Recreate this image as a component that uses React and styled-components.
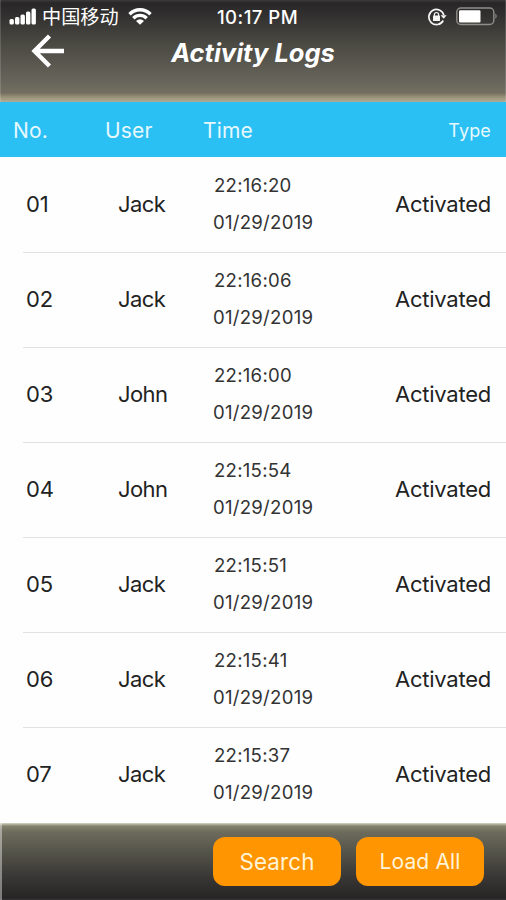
import React from 'react';
import styled, {createGlobalStyle} from 'styled-components';

const GlobalStyle = createGlobalStyle`
  * {
    box-sizing: border-box;
  }
  body {
    margin: 0;
    background: #fefefe;
    font-family: Inter, "Noto Sans CJK SC", sans-serif;
  }
`;

const Screen = styled.div`
  display: flex;
  flex-direction: column;
  width: 506px;
  height: 900px;
  overflow: hidden;
  background: #fefefe;
`;

const Header = styled.header`
  height: 102px;
  color: white;
  background: linear-gradient(#3c3a3b 0, #282627 3px, #323130 16px, #4b4a43 45px, #66645a 80px, #736f60 93px, #989077 97px, #b3ac95 102px);
  box-shadow: inset 1px 0 rgba(255, 255, 255, 0.15), inset -1px 0 rgba(255, 255, 255, 0.15);
`;

const StatusBar = styled.div`
  display: grid;
  grid-template-columns: 1fr auto 1fr;
  align-items: center;
  height: 33px;
  padding: 0 8px 0 9px;
`;

const StatusGroup = styled.div`
  display: flex;
  align-items: center;
  justify-content: ${(props) => props.$end ? 'flex-end' : 'flex-start'};
  gap: ${(props) => props.$gap}px;
`;

const Carrier = styled.span`
  font-family: "Noto Sans CJK SC", sans-serif;
  font-size: 19.2px;
  line-height: 24px;
  margin: -1px 4px 0 0;
`;

const Clock = styled.span`
  padding-left: 8px;
  font-size: 18.6px;
  font-weight: 500;
  letter-spacing: 0.45px;
`;

const TitleBar = styled.div`
  display: grid;
  grid-template-columns: 1fr auto 1fr;
  align-items: center;
  height: 38px;
  padding: 0 31px;
`;

const Title = styled.h1`
  margin: 1px 0 0;
  font-size: 25.5px;
  font-weight: 700;
  font-style: italic;
  line-height: 38px;
`;

const BackButton = styled.button`
  display: flex;
  width: 34px;
  margin-bottom: 3px;
  padding: 0;
  border: 0;
  color: white;
  background: none;
`;

const Columns = styled.div`
  display: grid;
  grid-template-columns: 92px 98px 1fr auto;
  align-items: center;
  height: 55px;
  padding: 2px 15px 0 13px;
  color: #e6f8fd;
  background: #2bc0f4;
  font-size: 21px;
  letter-spacing: 0.15px;
`;

const TypeLabel = styled.span`
  font-size: 18px;
`;

const List = styled.main`
  flex: 1;
`;

const Row = styled.div`
  display: grid;
  grid-template-columns: 92px 95px 1fr auto;
  align-items: center;
  height: 95px;
  margin-left: 23px;
  padding: 0 15px 1px 3px;
  color: #222;
  font-size: 22px;
  letter-spacing: -0.25px;
  & + & {
    padding-bottom: 3px;
    border-top: 1px solid #e2e2e2;
  }
`;

const User = styled.span`
  letter-spacing: -0.6px;
`;

const Stamp = styled.div`
  display: flex;
  flex-direction: column;
  color: #333;
  font-size: 18.6px;
  line-height: 37px;
  letter-spacing: 0.25px;
`;

const Hour = styled.span`
  padding-left: 1px;
`;

const Footer = styled.footer`
  display: flex;
  justify-content: flex-end;
  gap: 15px;
  height: 77px;
  padding: 14px 22px 0 0;
  background: linear-gradient(#d5d6c4 0, #85846f 3px, #6c6b5c 9px, #56554b 28px, #3b3936 52px, #272525 75px, #353333 77px);
  box-shadow: inset 2px 0 rgba(255, 255, 255, 0.4);
`;

const Button = styled.button`
  width: 128px;
  height: 49px;
  padding: 0;
  border: 0;
  border-radius: 12px;
  color: #fff3d8;
  background: #ff9500;
  font-family: inherit;
  font-size: ${(props) => props.$size || 22.4}px;
  letter-spacing: 0.15px;
`;

const logs = [
    ['01', 'Jack', '22:16:20'],
    ['02', 'Jack', '22:16:06'],
    ['03', 'John', '22:16:00'],
    ['04', 'John', '22:15:54'],
    ['05', 'Jack', '22:15:51'],
    ['06', 'Jack', '22:15:41'],
    ['07', 'Jack', '22:15:37'],
];

function SignalIcon() {
    return (
        <svg width="28" height="17" viewBox="0 0 28 17" fill="white">
            <rect x="0.5" y="11" width="4.4" height="5.5" rx="1.5"/>
            <rect x="6" y="9" width="4.4" height="7.5" rx="1.5"/>
            <rect x="11.5" y="6.5" width="4.4" height="10" rx="1.5"/>
            <rect x="17" y="3.5" width="4.4" height="13" rx="1.5"/>
            <rect x="22.5" y="0.5" width="4.4" height="16" rx="1.5"/>
        </svg>
    );
}

function WifiIcon() {
    return (
        <svg width="24" height="17" viewBox="0 0 24 17" fill="none" stroke="white" strokeWidth="3.4">
            <path d="M1.5 6.2C7.5.2 16.5.2 22.5 6.2"/>
            <path d="M5.3 10.2C9.2 6.4 14.8 6.4 18.7 10.2"/>
            <path d="M12 16.8 8 12.9Q12 9.8 16 12.9Z" fill="white" stroke="none"/>
        </svg>
    );
}

function LockIcon() {
    return (
        <svg width="20" height="18" viewBox="0 0 20 18" fill="none" stroke="#f4f4f4">
            <path d="M16.2 12.5A7.6 7.6 0 1 1 16.8 7" strokeWidth="1.7"/>
            <path d="M13.6 7.2H19.6L16.7 10.8Z" fill="#f4f4f4" stroke="none"/>
            <rect x="6" y="7.6" width="7" height="5.4" rx="0.6" fill="#f4f4f4" stroke="none"/>
            <path d="M7.4 8.3V6.6a2.1 2.1 0 0 1 4.2 0v1.7" strokeWidth="1.2"/>
        </svg>
    );
}

function BatteryIcon() {
    return (
        <svg width="42" height="19" viewBox="0 0 42 19">
            <rect x="0.8" y="1" width="37" height="16.5" rx="4" fill="none" stroke="#908e8b" strokeWidth="1.4"/>
            <rect x="3" y="3.2" width="21.5" height="12.2" rx="1.2" fill="white"/>
            <path d="M39.4 6.5Q42 9.2 39.4 12Z" fill="#908e8b"/>
        </svg>
    );
}

function BackIcon() {
    return (
        <svg width="34" height="34" viewBox="0 0 34 34" fill="none" stroke="white" strokeWidth="4.4">
            <path d="M18.5 2 3.5 17 18.5 32M3.5 17H33"/>
        </svg>
    );
}

export default function App() {
    return (
        <>
            <GlobalStyle/>
            <Screen>
                <Header>
                    <StatusBar>
                        <StatusGroup $gap={5}>
                            <SignalIcon/>
                            <Carrier>中国移动</Carrier>
                            <WifiIcon/>
                        </StatusGroup>
                        <Clock>10:17 PM</Clock>
                        <StatusGroup $end $gap={9}>
                            <LockIcon/>
                            <BatteryIcon/>
                        </StatusGroup>
                    </StatusBar>
                    <TitleBar>
                        <BackButton aria-label="Back"><BackIcon/></BackButton>
                        <Title>Activity Logs</Title>
                    </TitleBar>
                </Header>
                <Columns>
                    <span>No.</span>
                    <span>User</span>
                    <span>Time</span>
                    <TypeLabel>Type</TypeLabel>
                </Columns>
                <List>
                    {logs.map(([no, user, time]) => (
                        <Row key={no}>
                            <span>{no}</span>
                            <User>{user}</User>
                            <Stamp>
                                <Hour>{time}</Hour>
                                <span>01/29/2019</span>
                            </Stamp>
                            <span>Activated</span>
                        </Row>
                    ))}
                </List>
                <Footer>
                    <Button>Search</Button>
                    <Button $size={21}>Load All</Button>
                </Footer>
            </Screen>
        </>
    );
}
